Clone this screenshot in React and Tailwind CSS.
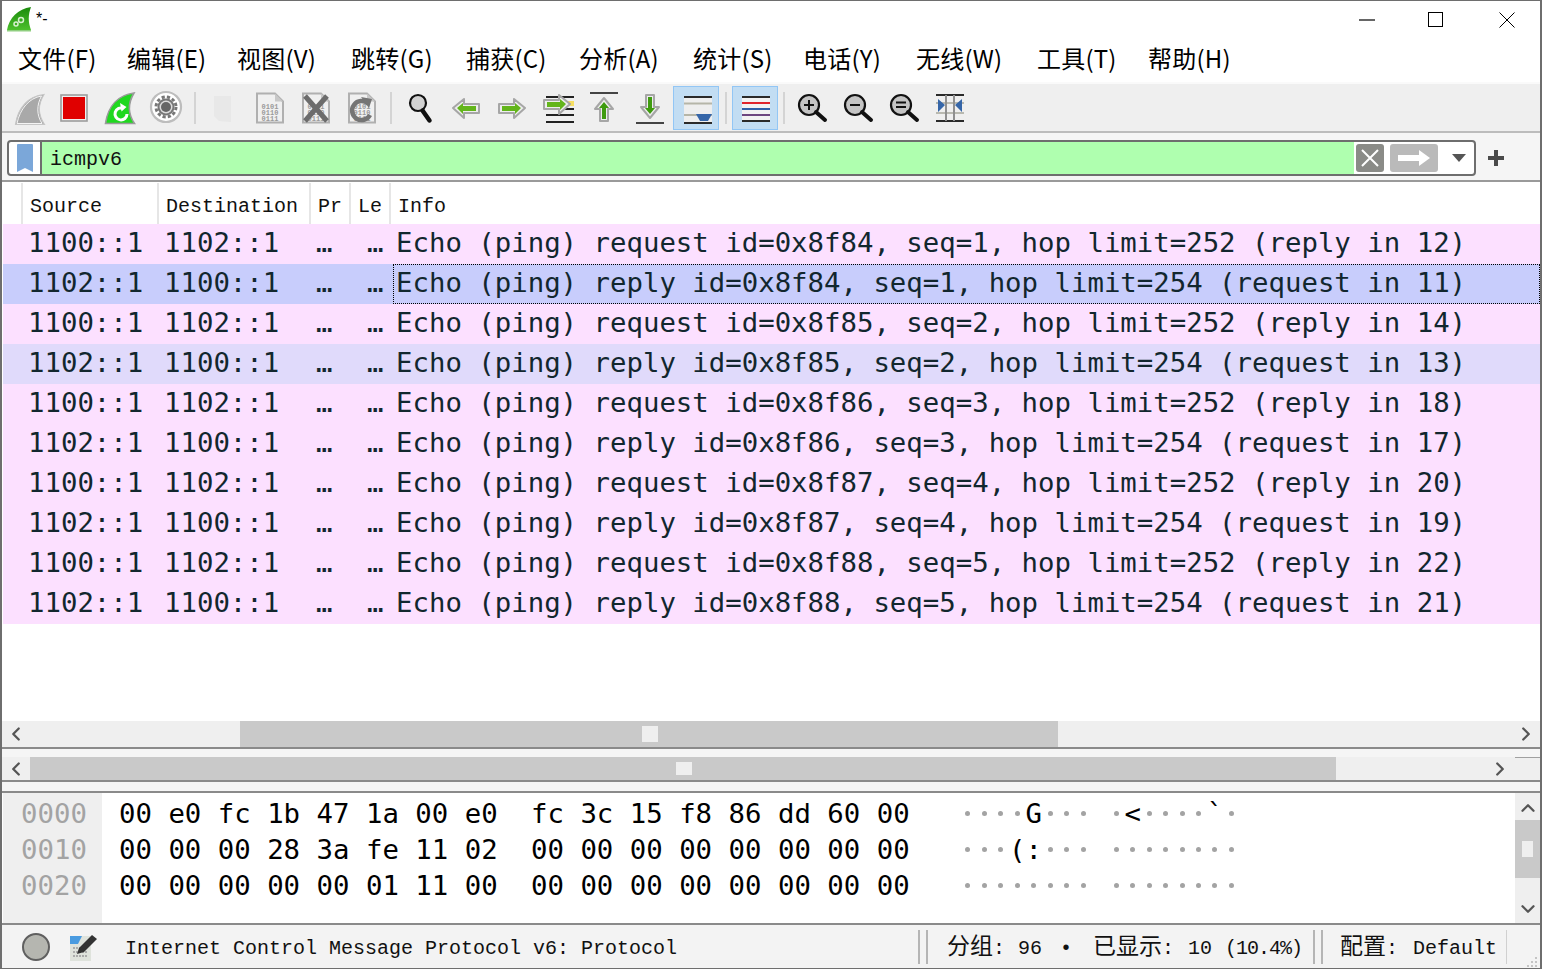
import { ChevronLeft, ChevronRight, ChevronUp, ChevronDown } from 'lucide-react';

const MONO = "font-['DejaVu_Sans_Mono',monospace]";
const SERIF_MONO = "font-['Liberation_Mono','Noto_Sans_CJK_SC',monospace]";

const rows = [
  ['1100::1', '1102::1', 'Echo (ping) request id=0x8f84, seq=1, hop limit=252 (reply in 12)', 'bg-[#fce0ff]'],
  ['1102::1', '1100::1', 'Echo (ping) reply id=0x8f84, seq=1, hop limit=254 (request in 11)', 'bg-[#c8cdfc]'],
  ['1100::1', '1102::1', 'Echo (ping) request id=0x8f85, seq=2, hop limit=252 (reply in 14)', 'bg-[#fce0ff]'],
  ['1102::1', '1100::1', 'Echo (ping) reply id=0x8f85, seq=2, hop limit=254 (request in 13)', 'bg-[#e0dafb]'],
  ['1100::1', '1102::1', 'Echo (ping) request id=0x8f86, seq=3, hop limit=252 (reply in 18)', 'bg-[#fce0ff]'],
  ['1102::1', '1100::1', 'Echo (ping) reply id=0x8f86, seq=3, hop limit=254 (request in 17)', 'bg-[#fce0ff]'],
  ['1100::1', '1102::1', 'Echo (ping) request id=0x8f87, seq=4, hop limit=252 (reply in 20)', 'bg-[#fce0ff]'],
  ['1102::1', '1100::1', 'Echo (ping) reply id=0x8f87, seq=4, hop limit=254 (request in 19)', 'bg-[#fce0ff]'],
  ['1100::1', '1102::1', 'Echo (ping) request id=0x8f88, seq=5, hop limit=252 (reply in 22)', 'bg-[#fce0ff]'],
  ['1102::1', '1100::1', 'Echo (ping) reply id=0x8f88, seq=5, hop limit=254 (request in 21)', 'bg-[#fce0ff]'],
];

const hexRows = [
  ['0000', '00 e0 fc 1b 47 1a 00 e0', 'fc 3c 15 f8 86 dd 60 00', '....G...', '.<....`.'],
  ['0010', '00 00 00 28 3a fe 11 02', '00 00 00 00 00 00 00 00', '...(:...', '........'],
  ['0020', '00 00 00 00 00 01 11 00', '00 00 00 00 00 00 00 00', '........', '........'],
];

const menus = [
  ['文件(F)', 'w-[109px]'],
  ['编辑(E)', 'w-[110px]'],
  ['视图(V)', 'w-[114px]'],
  ['跳转(G)', 'w-[115px]'],
  ['捕获(C)', 'w-[113px]'],
  ['分析(A)', 'w-[114px]'],
  ['统计(S)', 'w-[110px]'],
  ['电话(Y)', 'w-[113px]'],
  ['无线(W)', 'w-[121px]'],
  ['工具(T)', 'w-[111px]'],
  ['帮助(H)', 'w-[100px]'],
];

// paths below use screen coordinates, cx picks the window
function Tool({ cx, active, children }) {
  return (
    <div className={`w-[46px] h-[44px] shrink-0 flex items-center justify-center ${active ? 'bg-[#c2ddf3] border border-[#92c6f5]' : ''}`}>
      <svg width="40" height="40" viewBox={`${cx - 20} 88 40 40`} className="shrink-0">
        {children}
      </svg>
    </div>
  );
}

function Sep({ className = 'w-3' }) {
  return (
    <div className={`${className} h-[44px] shrink-0 flex items-center justify-center`}>
      <div className="w-[2px] h-[32px] bg-[#d4d4d4]" />
    </div>
  );
}

function FileIcon({ x, children }) {
  return (
    <g>
      <path d={`M${x + 1} 93.5h18l8 8v21h-26z`} fill="#f0f0f0" stroke="#b0b0b0" strokeWidth="2" />
      <path d={`M${x + 19} 93.5v8h8z`} fill="#c8c8c8" />
      <text x={x + 14} y="109" fontSize="7" fontWeight="700" textAnchor="middle" fill="#9a9a9a" fontFamily="Liberation Mono">0101</text>
      <text x={x + 14} y="115" fontSize="7" fontWeight="700" textAnchor="middle" fill="#9a9a9a" fontFamily="Liberation Mono">0110</text>
      <text x={x + 14} y="121" fontSize="7" fontWeight="700" textAnchor="middle" fill="#9a9a9a" fontFamily="Liberation Mono">0111</text>
      {children}
    </g>
  );
}

function Zoom({ cx, children }) {
  return (
    <g>
      <circle cx={cx - 3} cy="105" r="10" fill="#c4c4c4" stroke="#111" strokeWidth="2.2" />
      <path d={`M${cx + 4} 112l9 8`} stroke="#111" strokeWidth="4" strokeLinecap="round" />
      {children}
    </g>
  );
}

function Toolbar() {
  return (
    <div className="h-[49px] bg-[#efefef] border-t-2 border-t-[#fafafa] flex items-center pl-[3px]">
      <Tool cx={28}>
        <path d="M15.5 124.5C18 108 28 96 44 94.5C38 104 38 115 44.5 124.5Z" fill="#a9a9a9" stroke="#c6c6c6" strokeWidth="1.2" />
        <path d="M17 123.5C20 109 29 98 41.5 96C36.5 105 36.5 115 42 123.5Z" fill="none" stroke="#f4f4f4" strokeWidth="1" />
      </Tool>
      <Tool cx={74}>
        <rect x="61" y="95" width="26" height="26" fill="#efefef" stroke="#9d9d9d" strokeWidth="1.6" />
        <rect x="63" y="97" width="22" height="22" fill="#e00000" />
      </Tool>
      <Tool cx={120}>
        <path d="M105.5 123.5C108 106 118 95 134 93C128 103 128 114 134.5 123.5Z" fill="#1fd81f" stroke="#9a9a9a" strokeWidth="1.6" />
        <path d="M127 114a6 6 0 1 1-3.500-5.500" fill="none" stroke="#fff" strokeWidth="3" />
        <path d="M120 103l6.500 4-5 4.500z" fill="#fff" />
      </Tool>
      <Tool cx={166}>
        <circle cx="166" cy="107" r="15" fill="#fff" stroke="#bdbdbd" strokeWidth="2.200" />
        <circle cx="166" cy="107" r="10" fill="none" stroke="#777" strokeWidth="3" strokeDasharray="3.200 2.100" />
        <circle cx="166" cy="107" r="8.500" fill="#777" />
        <circle cx="166" cy="107" r="6.500" fill="#dcdcdc" />
        <circle cx="166" cy="107" r="5" fill="#666" />
      </Tool>
      <Sep />
      <Tool cx={224}>
        <path d="M214 96h17v26l-12-1-5-5z" fill="#e8e8e8" />
      </Tool>
      <Tool cx={270}>
        <FileIcon x={256} />
      </Tool>
      <Tool cx={316}>
        <FileIcon x={302}>
          <path d="M305 96l22 25M327 96l-22 25" stroke="#6c6c6c" strokeWidth="5" />
        </FileIcon>
      </Tool>
      <Tool cx={362}>
        <FileIcon x={348}>
          <path d="M370 115a9.500 9.500 0 1 1-2-11.500" fill="none" stroke="#757575" strokeWidth="4.500" />
          <path d="M361 97l11 2-3 9z" fill="#757575" />
        </FileIcon>
      </Tool>
      <Sep />
      <Tool cx={420}>
        <circle cx="418" cy="103" r="8" fill="#d2d2d2" stroke="#111" strokeWidth="2.2" />
        <path d="M422.5 110.5l7 10" stroke="#111" strokeWidth="4.5" strokeLinecap="round" />
      </Tool>
      <Tool cx={466}>
        <path d="M453 108l11-9v5h15v9h-15v5z" fill="#eee" stroke="#a6a6a6" strokeWidth="2" strokeLinejoin="round" />
        <path d="M457 108l6-5v3h13v5h-13v3z" fill="#63b51b" />
      </Tool>
      <Tool cx={512}>
        <path d="M525 108l-11-9v5h-15v9h15v5z" fill="#eee" stroke="#a6a6a6" strokeWidth="2" strokeLinejoin="round" />
        <path d="M521 108l-6-5v3h-13v5h13v3z" fill="#63b51b" />
      </Tool>
      <Tool cx={558}>
        <path d="M546 97h28M546 115h28M546 122h28" stroke="#222" strokeWidth="2" />
        <path d="M562 101h12v5h-12z" fill="#f7df62" />
        <path d="M546 109h28" stroke="#222" strokeWidth="2" />
        <path d="M570 104l-11-9v5h-15v9h15v5z" fill="#eee" stroke="#a6a6a6" strokeWidth="2" strokeLinejoin="round" />
        <path d="M566 104l-6-5v3h-13v5h13v3z" fill="#63b51b" />
      </Tool>
      <Tool cx={604}>
        <path d="M590 93h28" stroke="#444" strokeWidth="2" />
        <path d="M604 98l9 11h-5v12h-8v-12h-5z" fill="#eee" stroke="#a6a6a6" strokeWidth="2" strokeLinejoin="round" />
        <path d="M604 102l5 6h-3v11h-4v-11h-3z" fill="#3f9b0f" />
      </Tool>
      <Tool cx={650}>
        <path d="M636 123h28" stroke="#444" strokeWidth="2" />
        <path d="M650 118l9-11h-5V95h-8v12h-5z" fill="#eee" stroke="#a6a6a6" strokeWidth="2" strokeLinejoin="round" />
        <path d="M650 114l5-6h-3V97h-4v11h-3z" fill="#3f9b0f" />
      </Tool>
      <Tool cx={696} active>
        <path d="M684 97h28v26h-28z" fill="#eeeeee" />
        <path d="M684 97h28M684 123h28" stroke="#2a2a2a" strokeWidth="2" />
        <path d="M684 103.5h28M684 115h28" stroke="#b5b5a8" strokeWidth="2" />
        <path d="M696 114h16l-4 7h-8z" fill="#3565a8" />
      </Tool>
      <Sep className="w-[13px]" />
      <Tool cx={755} active>
        <path d="M742 96h28v26h-28z" fill="#f2f2f2" />
        <path d="M742 97h28M742 121h28" stroke="#2a2a2a" strokeWidth="2" />
        <path d="M742 103h28" stroke="#e0242c" strokeWidth="2" />
        <path d="M742 109h28" stroke="#2f5fa8" strokeWidth="2" />
        <path d="M742 115h28" stroke="#6d4680" strokeWidth="2" />
      </Tool>
      <Sep className="w-[11px]" />
      <Tool cx={812}>
        <Zoom cx={812}>
          <path d="M804 105h10M809 100v10" stroke="#111" strokeWidth="2" />
        </Zoom>
      </Tool>
      <Tool cx={858}>
        <Zoom cx={858}>
          <path d="M850 105h10" stroke="#111" strokeWidth="2" />
        </Zoom>
      </Tool>
      <Tool cx={904}>
        <Zoom cx={904}>
          <path d="M896 102.5h10M896 107h10" stroke="#111" strokeWidth="2" />
        </Zoom>
      </Tool>
      <Tool cx={950}>
        <path d="M936 95h28M936 121h28" stroke="#2a2a2a" strokeWidth="2" />
        <path d="M936 103h28M936 113h28" stroke="#b9b9b0" strokeWidth="2" />
        <path d="M946 95v26M954 95v26" stroke="#8f8f8f" strokeWidth="2" />
        <path d="M938 99l7 6-7 7zM962 99l-7 6 7 7z" fill="#3565a8" />
      </Tool>
    </div>
  );
}

function FilterBar() {
  return (
    <div className="h-[49px] bg-[#f5f5f5] border-t-2 border-t-[#bcbcbc] flex items-center pl-[5px] pr-[34px] pt-[3px]">
      <div className="w-[1469px] h-[36px] rounded-[4px] border-2 border-[#6e6e6e] bg-white flex items-stretch overflow-hidden">
        <div className="w-[33px] flex items-center justify-center border-r-2 border-[#6e6e6e]">
          <svg width="18" height="30" viewBox="0 0 18 30">
            <path d="M1 2a1 1 0 0 1 1-1h14a1 1 0 0 1 1 1v27l-8-4-8 4z" fill="#7ba7d9" />
          </svg>
        </div>
        <div className={`${SERIF_MONO} w-[1312px] bg-[#afffaf] pl-[8px] text-[20px] leading-[36px] text-[#111]`}>icmpv6</div>
        <div className="flex-1 flex items-center pl-[2px]">
          <div className="w-[28px] h-[28px] rounded-[3px] bg-[#8a8b87] flex items-center justify-center">
            <svg width="20" height="20" viewBox="0 0 20 20">
              <path d="M2 2l16 16M18 2L2 18" stroke="#fff" strokeWidth="2" />
            </svg>
          </div>
          <div className="ml-[6px] w-[48px] h-[28px] rounded-[3px] bg-[#bababa] flex items-center justify-center">
            <svg width="34" height="18" viewBox="0 0 34 18">
              <path d="M1 6h21V1l11 8-11 8v-5H1z" fill="#fff" />
            </svg>
          </div>
          <svg width="14" height="8" viewBox="0 0 14 8" className="ml-[14px]">
            <path d="M0 0h14l-7 8z" fill="#555" />
          </svg>
        </div>
      </div>
      <svg width="16" height="16" viewBox="0 0 16 16" className="ml-[12px]">
        <path d="M0 6h6V0h4v6h6v4h-6v6H6v-6H0z" fill="#4a4a4a" />
      </svg>
    </div>
  );
}

function PacketList() {
  const cols = 'grid grid-cols-[18px_136px_152px_40px_40px_1fr]';
  const head = `${SERIF_MONO} pl-[7px] pt-[8px] text-[20px] leading-[32px] text-[#111] border-l-2 border-[#e6e6e6]`;
  return (
    <div className="h-[541px] bg-white border-t-2 border-t-[#9a9a9a] pl-px">
      <div className={`${cols} h-[42px] pt-px`}>
        <div />
        <div className={head}>Source</div>
        <div className={head}>Destination</div>
        <div className={head}>Pr</div>
        <div className={head}>Le</div>
        <div className={head}>Info</div>
      </div>
      {rows.map((r, i) => (
        <div key={i} className={`${cols} ${r[3]} h-[40px] ${MONO} text-[27.35px] leading-[38px] text-[#12272e] whitespace-pre`}>
          <div />
          <div className="pl-[7px]">{r[0]}</div>
          <div className="pl-[7px]">{r[1]}</div>
          <div className="pl-[7px]">…</div>
          <div className="pl-[18px]">…</div>
          <div className={`ml-[4px] pl-[3px] ${i === 1 ? 'outline-1 outline-dotted outline-black -outline-offset-1' : ''}`}>{r[2]}</div>
        </div>
      ))}
    </div>
  );
}

function HScroll({ thumb, grip, rightArrow, className, children }) {
  return (
    <div className={`relative bg-[#efefef] flex items-center ${className}`}>
      <ChevronLeft size={22} strokeWidth={2.5} className="absolute left-[3px] text-[#555]" />
      <div className={`absolute top-0 bottom-0 bg-[#c9c9c9] ${thumb}`} />
      <div className={`absolute top-[5px] bottom-[5px] w-[16px] bg-[#efefef] ${grip}`} />
      <ChevronRight size={22} strokeWidth={2.5} className={`absolute text-[#555] ${rightArrow}`} />
      {children}
    </div>
  );
}

function HexDump() {
  return (
    <div className="h-[132px] flex bg-white border-t-2 border-t-[#8a8a8a] pl-px">
      <div className={`${MONO} w-[99px] bg-[#efefef] pl-[18px] pt-[3px] text-[27.35px] leading-[36px] text-[#a3a3a3]`}>
        {hexRows.map((h) => <div key={h[0]}>{h[0]}</div>)}
      </div>
      <div className={`${MONO} flex-1 pl-[17px] pt-[3px] text-[27.35px] leading-[36px] text-black whitespace-pre`}>
        {hexRows.map((h) => (
          <div key={h[0]} className="flex">
            <span className="w-[412px]">{h[1]}</span>
            <span className="w-[428.7px]">{h[2]}</span>
            <Ascii text={h[3]} />
            <span className="w-[16.47px]" />
            <Ascii text={h[4]} />
          </div>
        ))}
      </div>
      <div className="relative w-[25px] bg-[#efefef]">
        <ChevronUp size={22} strokeWidth={2.5} className="absolute left-[2px] top-[4px] text-[#555]" />
        <div className="absolute top-[27px] left-0 right-0 h-[58px] bg-[#c9c9c9] flex items-center justify-center">
          <div className="w-[11px] h-[16px] bg-[#efefef]" />
        </div>
        <ChevronDown size={22} strokeWidth={2.5} className="absolute left-[2px] bottom-[3px] text-[#555]" />
      </div>
    </div>
  );
}

function Ascii({ text }) {
  return (
    <span className="flex">
      {text.split('').map((c, i) => (
        <span key={i} className="w-[16.47px] flex justify-center">
          {c === '.' ? <span className="w-[5px] h-[5px] mt-[15px] rounded-full bg-[#a3a3a3]" /> : c}
        </span>
      ))}
    </span>
  );
}

function DoubleBar() {
  return (
    <div className="h-[34px] flex gap-[6px] shrink-0">
      <div className="w-[2px] bg-[#b5b5b5]" />
      <div className="w-[2px] bg-[#b5b5b5]" />
    </div>
  );
}

function StatusBar() {
  return (
    <div className="relative h-[45px] bg-[#f3f3f3] border-t-2 border-t-[#8a8a8a] flex items-center text-[20px] leading-[30px] text-[#111] whitespace-pre font-['Liberation_Mono','Noto_Sans_CJK_SC',monospace]">
      <div className="ml-[20px] w-[28px] h-[28px] rounded-full bg-[#b5b6b0] border-2 border-[#5f5f5f] shrink-0" />
      <svg width="30" height="30" viewBox="0 0 30 30" className="ml-[18px] shrink-0">
        <rect x="2" y="4" width="21" height="25" fill="#dfe3dc" />
        <path d="M2 4h12l-4 8H2z" fill="#4a9be0" />
        <path d="M5 16h14M5 20h14M5 24h14" stroke="#9a9a9a" strokeWidth="1.5" strokeDasharray="2 1" />
        <path d="M9 22l2-6L24 3l5 4-13 13z" fill="#333" />
      </svg>
      <span className="ml-[27px] pt-[4px] w-[793px] shrink-0">Internet Control Message Protocol v6: Protocol</span>
      <DoubleBar />
      <span className="ml-[19px] pt-[4px] w-[366px] shrink-0 flex items-baseline">
        <span className="text-[23px]">分组</span>
        <span>:</span>
        <span className="ml-[13px]">96</span>
        <span className="ml-[18px]">•</span>
        <span className="ml-[21px] text-[23px]">已显示</span>
        <span>:</span>
        <span className="ml-[14px]">10</span>
        <span className="ml-[13px] tracking-[-1px]">(10.4%)</span>
      </span>
      <DoubleBar />
      <span className="ml-[17px] pt-[4px] w-[166px] shrink-0 flex items-baseline">
        <span className="text-[23px]">配置</span>
        <span>:</span>
        <span className="ml-[15px]">Default</span>
      </span>
      <div className="w-px h-[34px] bg-[#d0d0d0]" />
      <svg width="12" height="12" viewBox="0 0 12 12" className="absolute right-[2px] bottom-0">
        <path d="M9 1h2v2H9zM5 5h2v2H5zM9 5h2v2H9zM1 9h2v2H1zM5 9h2v2H5zM9 9h2v2H9z" fill="#c4c4c4" />
      </svg>
    </div>
  );
}

export default function App() {
  return (
    <div className="w-[1542px] h-[969px] overflow-hidden bg-white border-l-2 border-r-2 border-t border-b border-[#6e6e6e] font-['Noto_Sans_CJK_SC',sans-serif]">
      <div className="h-[37px] flex items-center relative">
        <svg width="26" height="26" viewBox="0 0 26 26" className="ml-[4px] mb-[2px]">
          <defs>
            <linearGradient id="logoFill" x1="0" y1="0" x2="0" y2="1">
              <stop offset="0" stopColor="#1b8a0c" />
              <stop offset="1" stopColor="#4cc02c" />
            </linearGradient>
          </defs>
          <path d="M1 24C3 12 12 3 25 1c-3 8-3 15 0 23z" fill="url(#logoFill)" />
          <path d="M1 24h24v1.500H1z" fill="#8fce7f" />
          <circle cx="15" cy="14" r="2.500" fill="none" stroke="#d8f0d0" strokeWidth="1.500" />
          <circle cx="10" cy="18" r="2" fill="none" stroke="#d8f0d0" strokeWidth="1.500" />
        </svg>
        <span className="ml-[4px] mb-[2px] text-[16px] text-black font-['Liberation_Sans',sans-serif]">*-</span>
        <svg width="16" height="2" viewBox="0 0 16 2" className="ml-auto mr-[53px]"><path d="M0 1h16" stroke="#000" strokeWidth="1.2" /></svg>
        <svg width="15" height="15" viewBox="0 0 15 15" className="mr-[56px]"><rect x="0.5" y="0.5" width="14" height="14" fill="none" stroke="#000" /></svg>
        <svg width="16" height="16" viewBox="0 0 16 16" className="mr-[25px]"><path d="M0.5 0.5l15 15M15.5 0.5l-15 15" stroke="#000" /></svg>
      </div>
      <div className="h-[44px] flex items-center pl-[16px] pb-[4px] text-[24px] tracking-[0.2px] text-black whitespace-nowrap">
        {menus.map((m) => <span key={m[0]} className={`${m[1]} shrink-0`}>{m[0]}</span>)}
      </div>
      <Toolbar />
      <FilterBar />
      <PacketList />
      <HScroll className="h-[26px]" thumb="left-[238px] w-[818px]" grip="left-[640px]" rightArrow="left-[1513px]" />
      <div className="h-[10px] bg-[#f5f5f5] border-t-2 border-t-[#8a8a8a]" />
      <HScroll className="h-[23px]" thumb="left-[28px] w-[1306px]" grip="left-[674px]" rightArrow="left-[1487px]">
        <div className="absolute top-0 right-0 w-[25px] h-px bg-[#a0a0a0]" />
      </HScroll>
      <div className="h-[11px] bg-[#f5f5f5] border-t-2 border-t-[#8a8a8a]" />
      <HexDump />
      <StatusBar />
    </div>
  );
}
